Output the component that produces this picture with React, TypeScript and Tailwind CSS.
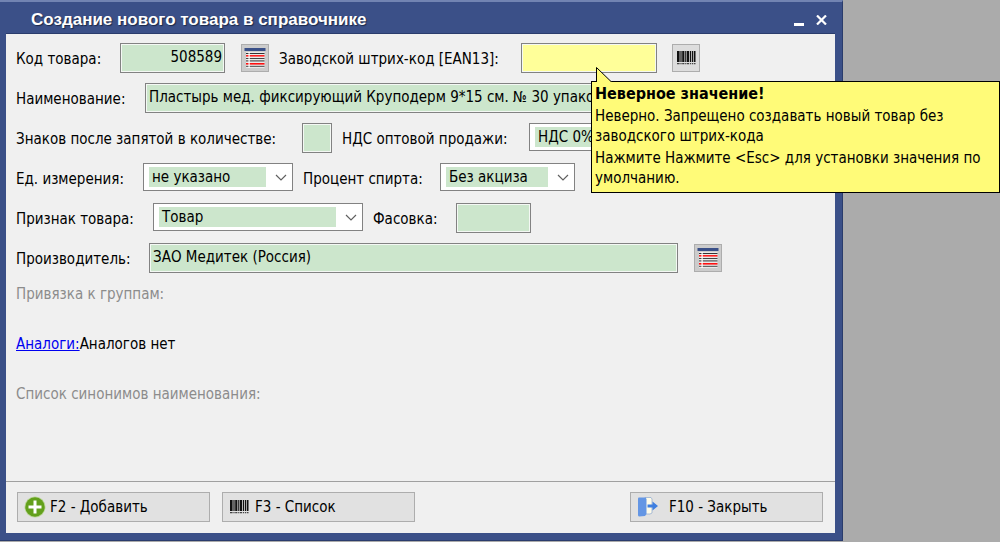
import type { ReactNode } from "react";

const FIELD =
  "h-[30px] border border-[#828282] text-black outline-none pr-0.5 pl-[3px] pb-0.5 shadow-[inset_0_0_0_1px_#f4f8f4]";
const GREEN = "bg-[#cce6cc]";

function Row({ children }: { children: ReactNode }) {
  return <div className="flex h-10 items-start pt-[5px]">{children}</div>;
}

function Label({ htmlFor, className, children }: { htmlFor: string; className: string; children: ReactNode }) {
  return (
    <label htmlFor={htmlFor} className={`shrink-0 whitespace-nowrap leading-8 ${className}`}>
      {children}
    </label>
  );
}

function Select({ id, className, value }: { id: string; className: string; value: string }) {
  return (
    <div className={`relative h-7 shrink-0 border border-[#828282] bg-white ${className}`}>
      <select
        id={id}
        className="block h-full w-full appearance-none bg-[#cce6cc] bg-clip-content py-[3px] pr-[26px] pl-[5px] indent-[3px] leading-5 text-black outline-none"
      >
        <option>{value}</option>
      </select>
      <svg className="pointer-events-none absolute top-[10px] right-[5px]" width="12" height="8" viewBox="0 0 12 8" fill="none">
        <path d="M1 1l5 5 5-5" stroke="#606060" strokeWidth="1.2" />
      </svg>
    </div>
  );
}

function ListIcon() {
  return (
    <svg width="22" height="22" viewBox="0 0 22 22">
      <rect x="0.5" y="1" width="21" height="3" fill="#3a5088" />
      <rect x="2" y="5" width="18.500" height="16" fill="#e8e8e8" />
      <rect x="2" y="6" width="18.500" height="1" fill="#333" />
      <rect x="2" y="8" width="18.500" height="1.600" fill="#ff2020" />
      <rect x="2" y="11" width="18.500" height="1" fill="#444" />
      <rect x="2" y="13.300" width="18.500" height="1.200" fill="#555" />
      <rect x="2" y="16" width="18.500" height="1.600" fill="#ff1010" />
      <rect x="2" y="18.800" width="18.500" height="1.200" fill="#666" />
      <rect x="4.500" y="5" width="1.200" height="16" fill="#fff" />
    </svg>
  );
}

function BarcodeIcon() {
  return (
    <svg width="20" height="14" viewBox="0 0 20 14" fill="#111">
      <path d="M1 0h2.600v11h-2.600zM4.400 0h1.200v11h-1.200zM6.200 0h2.200v11h-2.200zM9.200 0h1.200v11h-1.200zM11 0h2.200v11h-2.200zM14 0h1.200v11h-1.200zM16 0h1.300v11h-1.300zM18 0h1.500v11h-1.500z" />
      <path d="M1 12h2.600v1.200h-2.600zM4.400 12h1.200v1.200h-1.200zM6.200 12h2.200v1.200h-2.200zM9.200 12h1.200v1.200h-1.200zM11 12h2.200v1.200h-2.200zM14 12h1.200v1.200h-1.200zM16 12h1.300v1.200h-1.300zM18 12h1.500v1.200h-1.500z" fill="#444" />
    </svg>
  );
}

function AddIcon() {
  return (
    <svg width="22" height="22" viewBox="0 0 22 22">
      <circle cx="11" cy="11" r="10.500" fill="#b9d596" />
      <circle cx="11" cy="11" r="9.700" fill="#63a01c" />
      <path d="M11 4.500v13M4.500 11h13" stroke="#fff" strokeWidth="3" />
    </svg>
  );
}

function ExitIcon() {
  return (
    <svg width="22" height="22" viewBox="0 0 22 22">
      <path d="M8 1.500h6l1 1.500v14l-2 1H8z" fill="#fffbe8" stroke="#8aa6d0" strokeWidth="0.7" />
      <path d="M1 2.500Q1 1.500 2 1.500h6.500l1 1.500v15l-1.500 2L2 20.500q-1-.3-1-1.500z" fill="#6496e4" />
      <path d="M10.500 8.500h5V5.500l5.500 4.500-5.500 4.500v-3h-5z" fill="#3f7fe0" />
    </svg>
  );
}

function IconButton({ label, className, children }: { label: string; className: string; children: ReactNode }) {
  return (
    <button
      type="button"
      aria-label={label}
      className={`mt-px flex size-7 shrink-0 items-center justify-center border border-[#adadad] ${className}`}
    >
      {children}
    </button>
  );
}

function ActionButton({ icon, className, children }: { icon: ReactNode; className: string; children: ReactNode }) {
  return (
    <button
      type="button"
      className={`flex h-[30px] w-[193px] items-center border border-[#adadad] bg-[#e1e1e1] pl-1.5 ${className}`}
    >
      {icon}
      {children}
    </button>
  );
}

export default function App() {
  return (
    <div className="flex min-h-screen overflow-hidden bg-[#ababab] pr-[157px] pb-px font-['DejaVu_Sans_Condensed','DejaVu_Sans',sans-serif] text-[15px] text-black">
      <main className="flex flex-1 flex-col border-t-2 border-r border-b border-t-[#7284b2] border-r-[#2a3c6c] border-b-[#2a3c6c] bg-[#3b5088] pr-[7px] pb-[7px] pl-[6px]">
        <header className="flex h-[31px] shrink-0 items-center pt-1 pr-2 pl-[25px] text-white">
          <h1 className="flex-1 font-['Liberation_Sans',sans-serif] text-[17px] font-bold [text-shadow:1px_1px_1px_#1c2848]">
            Создание нового товара в справочнике
          </h1>
          <button type="button" aria-label="Свернуть" className="mr-3">
            <svg width="10" height="12" viewBox="0 0 10 12">
              <path d="M0 10.500h10" stroke="#fff" strokeWidth="3" />
            </svg>
          </button>
          <button type="button" aria-label="Закрыть">
            <svg width="11" height="10" viewBox="0 0 11 10">
              <path d="M1 .5l9 9M10 .5l-9 9" stroke="#fff" strokeWidth="2.200" />
            </svg>
          </button>
        </header>

        <form className="flex flex-1 flex-col border-t border-[#2a3c6c] bg-[#f0f0f0]">
          <div className="flex-1 px-[10px] pt-1">
            <Row>
              <Label htmlFor="code" className="w-[104px]">Код товара:</Label>
              <input id="code" defaultValue="508589" className={`${FIELD} ${GREEN} w-[105px] text-right`} />
              <IconButton label="Выбрать код" className="ml-4 bg-[#cccccc]"><ListIcon /></IconButton>
              <Label htmlFor="ean" className="ml-[10px] w-[242px]">Заводской штрих-код [EAN13]:</Label>
              <div className="relative shrink-0">
                <input id="ean" className={`${FIELD} block w-[136px] bg-[#ffff99]`} />
                <div
                  role="alert"
                  className="absolute top-[38px] left-[70px] z-10 h-28 w-[409px] border border-black bg-[#fffb78] pt-0.5 pl-[3px] leading-5"
                >
                  <svg className="absolute -top-4 left-1" width="18" height="17" viewBox="0 0 18 17">
                    <path d="M.5 17V1.500L15.500 16v1z" fill="#fffb78" />
                    <path d="M.5 16V1.500L15 15.500" fill="none" stroke="#000" />
                  </svg>
                  <p className="mb-0.5 text-base leading-5 font-bold">Неверное значение!</p>
                  <p className="mb-0.5">Неверно. Запрещено создавать новый товар без<br />заводского штрих-кода</p>
                  <p>Нажмите Нажмите &lt;Esc&gt; для установки значения по<br />умолчанию.</p>
                </div>
              </div>
              <IconButton label="Сканировать штрих-код" className="ml-[15px] bg-[#dddddd]"><BarcodeIcon /></IconButton>
            </Row>
            <Row>
              <Label htmlFor="name" className="w-[129px]">Наименование:</Label>
              <input
                id="name"
                defaultValue="Пластырь мед. фиксирующий Круподерм 9*15 см. № 30 упаковка"
                className={`${FIELD} ${GREEN} min-w-0 flex-1`}
              />
            </Row>
            <Row>
              <Label htmlFor="digits" className="w-[286px]">Знаков после запятой в количестве:</Label>
              <input id="digits" className={`${FIELD} ${GREEN} w-[30px]`} />
              <Label htmlFor="vat" className="ml-[10px] w-[187px]">НДС оптовой продажи:</Label>
              <Select id="vat" value="НДС 0%" className="w-[150px]" />
            </Row>
            <Row>
              <Label htmlFor="unit" className="w-[127px]">Ед. измерения:</Label>
              <Select id="unit" value="не указано" className="w-[150px]" />
              <Label htmlFor="alcohol" className="ml-[10px] w-[137px]">Процент спирта:</Label>
              <Select id="alcohol" value="Без акциза" className="w-[135px]" />
            </Row>
            <Row>
              <Label htmlFor="kind" className="w-[137px]">Признак товара:</Label>
              <Select id="kind" value="Товар" className="w-[210px]" />
              <Label htmlFor="pack" className="ml-[10px] w-[83px]">Фасовка:</Label>
              <input id="pack" className={`${FIELD} ${GREEN} w-[75px]`} />
            </Row>
            <Row>
              <Label htmlFor="maker" className="w-[133px]">Производитель:</Label>
              <input
                id="maker"
                defaultValue="ЗАО Медитек (Россия)"
                className={`${FIELD} ${GREEN} mr-4 min-w-0 flex-1`}
              />
              <IconButton label="Выбрать производителя" className="mr-[103px] bg-[#cccccc]"><ListIcon /></IconButton>
            </Row>
            <div className="flex flex-col gap-[30px] pt-1.5 leading-5">
              <p className="text-[#8c8c8c]">Привязка к группам:</p>
              <p><a href="#analogs" className="text-[#0000f0] underline">Аналоги:</a>Аналогов нет</p>
              <p className="text-[#8c8c8c]">Список синонимов наименования:</p>
            </div>
          </div>

          <footer className="flex border-t border-[#a0a0a0] pt-[10px] pr-3 pb-[11px] pl-[11px]">
            <ActionButton icon={<AddIcon />} className="mr-3 gap-1">F2 - Добавить</ActionButton>
            <ActionButton icon={<BarcodeIcon />} className="gap-1.5">F3 - Список</ActionButton>
            <ActionButton icon={<ExitIcon />} className="ml-auto gap-[10px]">F10 - Закрыть</ActionButton>
          </footer>
        </form>
      </main>
    </div>
  );
}
